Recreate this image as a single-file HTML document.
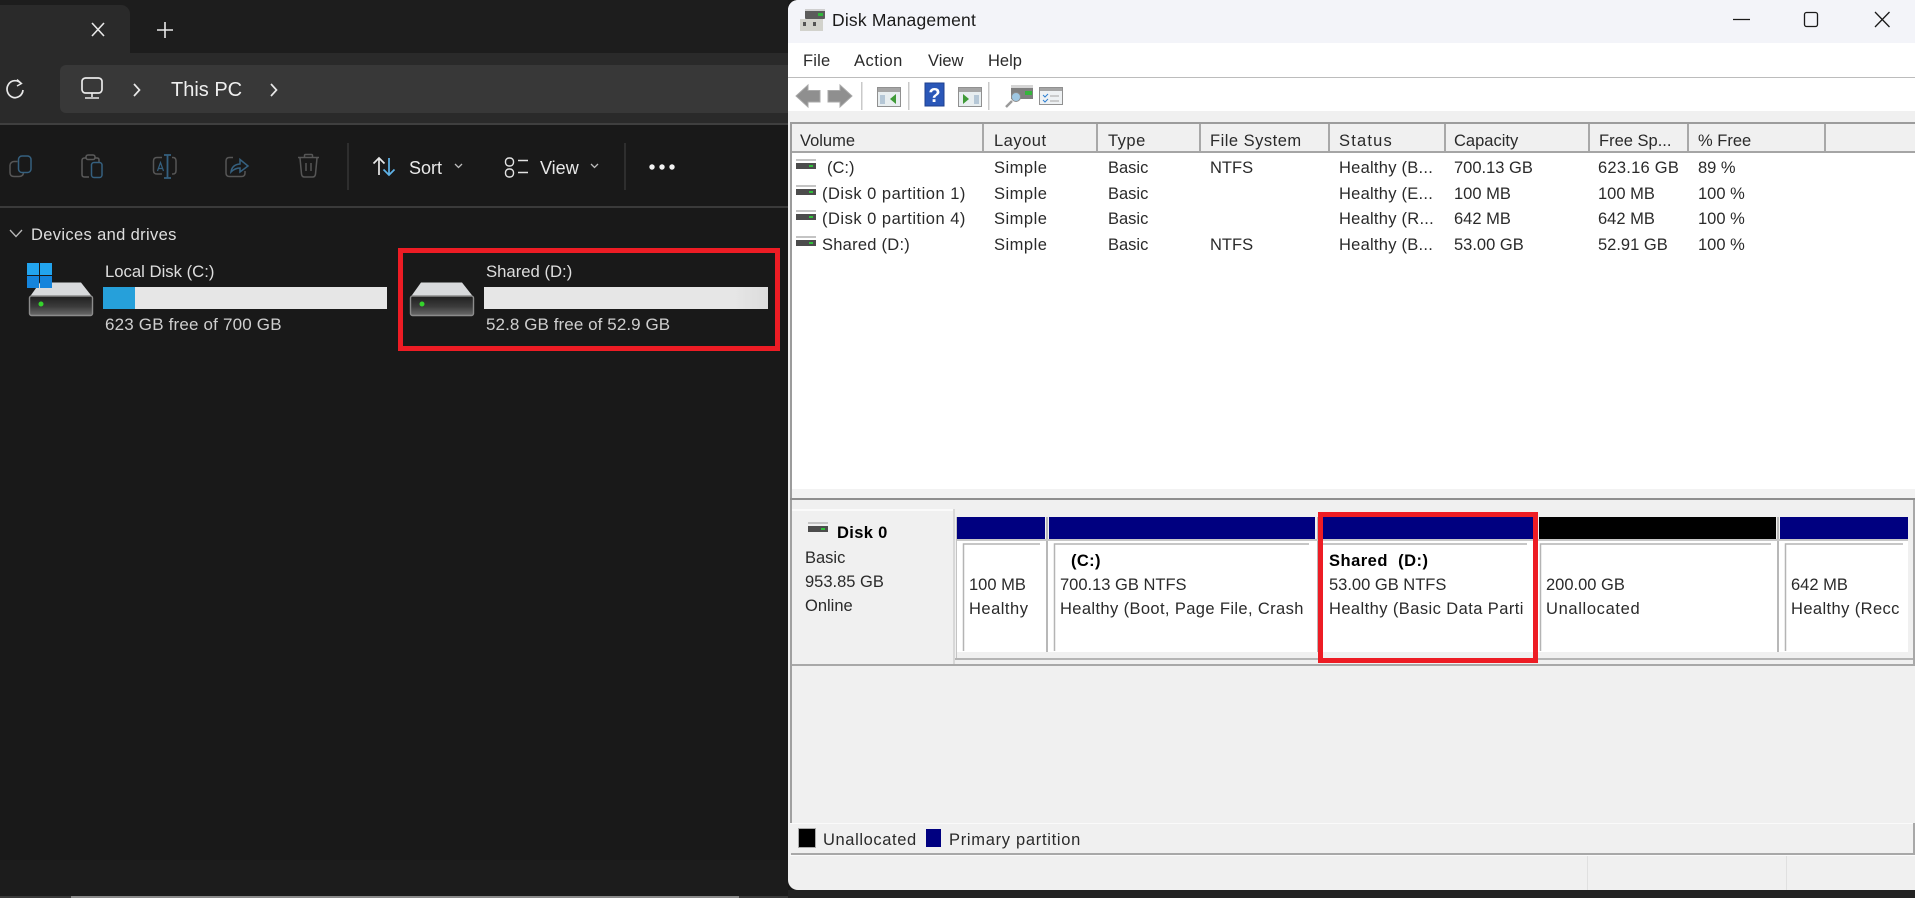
<!DOCTYPE html>
<html><head><meta charset="utf-8"><title>Disk Management</title>
<style>
html,body{margin:0;padding:0;background:#191919}
#p{position:relative;width:1915px;height:898px;overflow:hidden;background:#191919;font-family:"Liberation Sans",sans-serif}
.a{position:absolute}
.t{position:absolute;white-space:nowrap;font-size:17px;line-height:20px;color:#1c1c1c;transform:translateY(-10px)}
.l{color:#dedede}
.b{font-weight:bold;color:#000;letter-spacing:.35px}
.s{color:#2a2a2a;font-size:16.5px}
.w{letter-spacing:.5px}
.m{letter-spacing:.25px}
svg{position:absolute;overflow:visible}
.bar{position:absolute;top:517px;height:22px}
.sep{position:absolute;top:517px;height:141px;width:2px;background:#b8b8b8}
</style></head><body><div id="p">

<!-- Explorer chrome -->
<div class="a" style="left:0;top:0;width:788px;height:53px;background:#1d1d1d"></div>
<div class="a" style="left:0;top:5px;width:130px;height:48px;background:#2a2a2a;border-top-right-radius:9px"></div>
<div class="a" style="left:0;top:53px;width:788px;height:70px;background:#2a2a2a"></div>
<div class="a" style="left:60px;top:65px;width:728px;height:48px;background:#383838;border-radius:6px 0 0 6px"></div>
<div class="a" style="left:0;top:123px;width:788px;height:2px;background:#3f3f3f"></div>
<div class="a" style="left:0;top:206px;width:788px;height:2px;background:#3a3a3a"></div>
<div class="a" style="left:0;top:860px;width:788px;height:36px;background:#1c1c1c"></div>
<div class="a" style="left:71px;top:896px;width:668px;height:2px;background:#8a8a8a"></div>
<div class="a" style="left:0;top:896px;width:71px;height:2px;background:#3a3a3a"></div>
<div class="a" style="left:739px;top:896px;width:49px;height:2px;background:#3a3a3a"></div>
<div class="a" style="left:788px;top:890px;width:1127px;height:8px;background:#232323"></div>

<svg style="left:0;top:0" width="340" height="120" fill="none" stroke="#e8e8e8" stroke-width="1.6">
<path d="M92 23L104 36M104 23L92 36"/>
<path d="M165 22V38M157 30H173"/>
<path d="M21 83.5A8 8.5 0 1 0 23 90" stroke-width="1.7"/><path d="M17 79.5L21.5 83.5L17 86" stroke-width="1.4"/>
<rect x="82" y="78" width="20" height="15" rx="3.5" stroke-width="1.7"/><path d="M92 93V97M85 98H99" stroke-width="1.6"/>
<path d="M134 84L139.5 90L134 96M271 84L276.5 90L271 96" stroke-width="1.7"/>
</svg>
<div class="t l" style="left:171px;top:90px;font-size:20px;color:#efefef">This PC</div>
<svg style="left:0;top:0" width="340" height="210" fill="none" stroke-width="1.5">
<!-- copy -->
<path d="M17.500 161.500H14a4 4 0 0 0-4 4v7q0 4 4 4h5q4 0 4.500-3.500" stroke="#565656"/>
<rect x="18.500" y="156" width="12.500" height="16.500" rx="3.500" stroke="#35607f"/>
<!-- paste -->
<path d="M86 158h-1.500q-2.500 0-2.500 2.500v14q0 2.500 2.500 2.500h4.500M95 158h2q2 0 2 2v2" stroke="#5a5a5a"/>
<rect x="86" y="155" width="9" height="4.500" rx="2" stroke="#5a5a5a"/>
<rect x="91.500" y="162.500" width="10.500" height="15" rx="2.500" stroke="#35607f"/>
<!-- rename -->
<path d="M162 157.500h-5q-3.500 0-3.500 3.500v9.500q0 3.500 3.500 3.500h5M172 157.500h1q3 0 3 3.500v9.500q0 3.500-3 3.500h-1" stroke="#565656"/>
<path d="M167.500 155.500V177.500M164 155h7M164 178h7" stroke="#35607f" stroke-width="1.8"/><path d="M157.500 171l3-8.500 3 8.500M158.500 168.500h4" stroke="#35607f" stroke-width="1.200"/>
<!-- share -->
<path d="M233 157.500h-3.500q-3.500 0-3.500 3.500v12q0 3.500 3.500 3.500h12q3.500 0 3.500-3.500v-2" stroke="#565656"/>
<path d="M231 172q1-7.500 9-8v-4.500l8 6.500-8 6v-4q-5 0-9 4z" stroke="#35607f"/>
<!-- delete -->
<path d="M298 157.500h21M304.500 157.500v-2q0-1 1-1h6q1 0 1 1v2M300 158l1.500 16q.3 3 3 3h8q2.700 0 3-3l1.500-16M306 163v8M311 163v8" stroke="#565656"/>
</svg>
<div class="a" style="left:347px;top:143px;width:2px;height:47px;background:#2e2e2e"></div>
<div class="a" style="left:624px;top:143px;width:2px;height:47px;background:#2e2e2e"></div>
<svg style="left:370px;top:150px" width="320" height="36" fill="none" stroke-width="1.7">
<path d="M9 25V8M3.500 13.500L9 8l5.500 5.500" stroke="#e8e8e8"/>
<path d="M19 8V25M13.500 19.500L19 25l5.500-5.500" stroke="#5fb3e8"/>
<path d="M85 14l3.500 3.500L92 14M221 14l3.500 3.500L228 14" stroke="#bdbdbd" stroke-width="1.3"/>
<rect x="135.500" y="8" width="8" height="8" rx="3.500" stroke="#e2e2e2" stroke-width="1.4"/><rect x="135.500" y="19" width="8" height="8" rx="3.500" stroke="#e2e2e2" stroke-width="1.4"/>
<path d="M148 10.500h10M148 22.500h10" stroke="#e2e2e2" stroke-width="1.5"/>
<g fill="#f2f2f2" stroke="none"><circle cx="282" cy="17" r="2.700"/><circle cx="292" cy="17" r="2.700"/><circle cx="302" cy="17" r="2.700"/></g>
</svg>
<div class="t l" style="left:409px;top:168px;color:#e8e8e8;font-size:18px">Sort</div>
<div class="t l" style="left:540px;top:168px;color:#e8e8e8;font-size:18px">View</div>

<svg style="left:0;top:0" width="60" height="250" fill="none"><path d="M10 230l6 6.500 6-6.500" stroke="#b8b8b8" stroke-width="1.3"/></svg>
<div class="t l" style="left:31px;top:235px;font-size:16.500px;letter-spacing:.35px">Devices and drives</div>

<!-- Drives -->
<svg style="left:0;top:0;" width="0" height="0"><defs>
<linearGradient id="g1" x1="0" y1="0" x2="0" y2="1"><stop offset="0" stop-color="#1f1f1f"/><stop offset=".55" stop-color="#3c3c3c"/><stop offset="1" stop-color="#6b6b6b"/></linearGradient></defs></svg>
<svg style="left:29px;top:282px" width="66" height="34">
<path d="M1 14.500L11 .5H52L63 14.500z" fill="#d8dadc"/><rect x=".5" y="14" width="63" height="19.500" rx="2" fill="url(#g1)" stroke="#8c8c8c" stroke-width="1.400"/><circle cx="12" cy="22" r="2.500" fill="#35d32c"/></svg>
<svg style="left:410px;top:282px" width="66" height="34">
<path d="M1 14.500L11 .5H52L63 14.500z" fill="#d8dadc"/><rect x=".5" y="14" width="63" height="19.500" rx="2" fill="url(#g1)" stroke="#8c8c8c" stroke-width="1.400"/><circle cx="12" cy="22" r="2.500" fill="#35d32c"/></svg>
<svg style="left:27px;top:263px" width="26" height="25" fill="#1b95e6"><rect width="12" height="12" fill="#22a4ee"/><rect x="13" width="12" height="12" fill="#22a4ee"/><rect y="13" width="12" height="12" fill="#1484dc"/><rect x="13" y="13" width="12" height="12" fill="#1484dc"/></svg>

<div class="t l" style="left:105px;top:272px;font-size:16.700px">Local Disk (C:)</div>
<div class="a" style="left:103px;top:287px;width:284px;height:22px;background:#e6e6e6"></div>
<div class="a" style="left:103px;top:287px;width:32px;height:22px;background:#26a0da"></div>
<div class="t l" style="left:105px;top:325px;color:#cfcfcf;letter-spacing:.18px">623 GB free of 700 GB</div>
<div class="t l" style="left:486px;top:272px;font-size:16.700px">Shared (D:)</div>
<div class="a" style="left:484px;top:287px;width:284px;height:22px;background:linear-gradient(90deg,#e6e6e6 88%,#dcdcdc)"></div>
<div class="t l" style="left:486px;top:325px;color:#cfcfcf;letter-spacing:.08px">52.8 GB free of 52.9 GB</div>
<div class="a" style="left:398px;top:248px;width:382px;height:103px;border:5px solid #ed1c24;box-sizing:border-box"></div>

<!-- Window -->
<div class="a" style="left:788px;top:0;width:1127px;height:890px;background:#f0f0f0;border-radius:10px 0 0 10px;overflow:hidden">
<div class="a" style="left:0;top:0;width:1127px;height:43px;background:#f3f4f9"></div>
<div class="a" style="left:0;top:43px;width:1127px;height:34px;background:#fff"></div>
<div class="a" style="left:0;top:77px;width:1127px;height:1px;background:#bcbcbc"></div>
<div class="a" style="left:0;top:78px;width:1127px;height:33px;background:#fff"></div>
</div>

<!-- title -->
<svg style="left:799px;top:7px" width="28" height="26">
<rect x="6" y="3" width="20" height="9" rx="1" fill="#5b5b5b"/><rect x="6" y="2" width="20" height="2" fill="#cfcfcf"/><rect x="19" y="6" width="5" height="3" fill="#2fb53a"/>
<rect x="1" y="12" width="23" height="12" fill="#d2d2cc"/><rect x="4" y="15" width="3" height="4" fill="#555"/><rect x="14" y="15" width="3" height="4" fill="#555"/></svg>
<div class="t" style="left:832px;top:20px;color:#1a1a1a;font-size:17.500px;letter-spacing:.2px">Disk Management</div>
<svg style="left:0;top:0" width="1915" height="40" fill="none" stroke="#1a1a1a" stroke-width="1.300">
<path d="M1733 19.500H1750"/>
<rect x="1804.500" y="12.500" width="13" height="14" rx="2"/>
<path d="M1875 12L1889.500 27M1889.500 12L1875 27"/>
</svg>

<div class="t s" style="left:803px;top:61px;letter-spacing:.2px">File</div>
<div class="t s" style="left:854px;top:61px;letter-spacing:.5px">Action</div>
<div class="t s" style="left:928px;top:61px">View</div>
<div class="t s" style="left:988px;top:61px">Help</div>

<!-- toolbar icons -->
<svg style="left:790px;top:78px" width="300" height="33">
<path d="M6 18L18 7V12.500H30V24H18V29z" fill="#8f8f8f" stroke="#a8a8a8"/>
<path d="M62 18L50 7V12.500H38V24H50V29z" fill="#8f8f8f" stroke="#a8a8a8"/>
<rect x="71" y="4" width="1.500" height="28" fill="#c9c9c9"/><rect x="118" y="4" width="1.500" height="28" fill="#c9c9c9"/><rect x="198" y="4" width="1.500" height="28" fill="#c9c9c9"/>
<rect x="87.500" y="9.500" width="23" height="19" fill="#e8eef0" stroke="#909090"/><rect x="88" y="10" width="22" height="4" fill="#a5a5a5"/><rect x="90" y="17" width="5" height="9" fill="#b5c7d6"/><path d="M106 16v10l-6-5z" fill="#3f9a37"/>
<rect x="135" y="5" width="19" height="23" fill="#2a57b8" stroke="#1d3f8e"/><text x="144.500" y="24" font-family="Liberation Sans" font-size="20" font-weight="bold" fill="#fff" text-anchor="middle">?</text>
<rect x="168.500" y="9.500" width="23" height="19" fill="#e8eef0" stroke="#909090"/><rect x="169" y="10" width="22" height="4" fill="#a5a5a5"/><rect x="184" y="17" width="5" height="9" fill="#b5c7d6"/><path d="M173 16v10l6-5z" fill="#3f9a37"/>
<rect x="221" y="9" width="22" height="12" fill="#7f7f7f"/><rect x="221" y="7" width="22" height="3" fill="#d5d5d5"/><rect x="235" y="13" width="7" height="4" fill="#35b53c"/><circle cx="226" cy="19" r="4.500" fill="#9fc7e2" stroke="#8c8c8c"/><path d="M222 23L216 29" stroke="#9a9a9a" stroke-width="2.500"/>
<rect x="249.500" y="9.500" width="23" height="17" fill="#eef1f3" stroke="#909090"/><rect x="250" y="10" width="22" height="3" fill="#a5a5a5"/><path d="M253 17l2 2 3-3M253 22l2 2 3-3" stroke="#2e7fd0" fill="none"/><path d="M260 18h9M260 23h9" stroke="#a5a5a5"/>
</svg>

<!-- list -->
<div class="a" style="left:790px;top:122px;width:1125px;height:2px;background:#9c9c9c"></div>
<div class="a" style="left:790px;top:122px;width:2px;height:378px;background:#9c9c9c"></div>
<div class="a" style="left:792px;top:124px;width:1123px;height:27px;background:#f0f0f0"></div>
<div class="a" style="left:792px;top:151px;width:1123px;height:2px;background:#a5a5a5"></div>
<div class="a" style="left:792px;top:153px;width:1123px;height:336px;background:#fff"></div>
<div class="a" style="left:792px;top:489px;width:1123px;height:9px;background:#f2f2f2"></div>
<div class="a" style="left:790px;top:498px;width:1125px;height:2px;background:#8e8e8e"></div>
<div class="a" style="left:982px;top:124px;width:2px;height:27px;background:#a8a8a8"></div>
<div class="a" style="left:1096px;top:124px;width:2px;height:27px;background:#a8a8a8"></div>
<div class="a" style="left:1199px;top:124px;width:2px;height:27px;background:#a8a8a8"></div>
<div class="a" style="left:1328px;top:124px;width:2px;height:27px;background:#a8a8a8"></div>
<div class="a" style="left:1444px;top:124px;width:2px;height:27px;background:#a8a8a8"></div>
<div class="a" style="left:1588px;top:124px;width:2px;height:27px;background:#a8a8a8"></div>
<div class="a" style="left:1687px;top:124px;width:2px;height:27px;background:#a8a8a8"></div>
<div class="a" style="left:1824px;top:124px;width:2px;height:27px;background:#a8a8a8"></div>

<div class="t s" style="left:800px;top:141px">Volume</div><div class="t s w" style="left:994px;top:141px">Layout</div><div class="t s w" style="left:1108px;top:141px">Type</div><div class="t s w" style="left:1210px;top:141px">File System</div><div class="t s" style="left:1339px;top:141px;letter-spacing:1.2px">Status</div><div class="t s" style="left:1454px;top:141px">Capacity</div><div class="t s" style="left:1599px;top:141px">Free Sp...</div><div class="t s" style="left:1698px;top:141px">% Free</div>

<svg style="left:796px;top:158px" width="22" height="96">
<g><rect x="0" y="1" width="20" height="2" fill="#c4c4c4"/><rect x="0" y="5" width="20" height="6" fill="#4c4c4c"/><rect x="13" y="7" width="4" height="2" fill="#2fc03a"/></g>
<g transform="translate(0,26)"><rect x="0" y="1" width="20" height="2" fill="#c4c4c4"/><rect x="0" y="5" width="20" height="6" fill="#4c4c4c"/><rect x="13" y="7" width="4" height="2" fill="#2fc03a"/></g>
<g transform="translate(0,51)"><rect x="0" y="1" width="20" height="2" fill="#c4c4c4"/><rect x="0" y="5" width="20" height="6" fill="#4c4c4c"/><rect x="13" y="7" width="4" height="2" fill="#2fc03a"/></g>
<g transform="translate(0,77)"><rect x="0" y="1" width="20" height="2" fill="#c4c4c4"/><rect x="0" y="5" width="20" height="6" fill="#4c4c4c"/><rect x="13" y="7" width="4" height="2" fill="#2fc03a"/></g>
</svg>

<div class="t s" style="left:827px;top:168px">(C:)</div><div class="t s w" style="left:994px;top:168px">Simple</div><div class="t s" style="left:1108px;top:168px">Basic</div><div class="t s" style="left:1210px;top:168px">NTFS</div><div class="t s m" style="left:1339px;top:168px">Healthy (B...</div><div class="t s" style="left:1454px;top:168px">700.13 GB</div><div class="t s m" style="left:1598px;top:168px">623.16 GB</div><div class="t s" style="left:1698px;top:168px">89 %</div>
<div class="t s w" style="left:822px;top:194px">(Disk 0 partition 1)</div><div class="t s w" style="left:994px;top:194px">Simple</div><div class="t s" style="left:1108px;top:194px">Basic</div><div class="t s m" style="left:1339px;top:194px">Healthy (E...</div><div class="t s" style="left:1454px;top:194px">100 MB</div><div class="t s" style="left:1598px;top:194px">100 MB</div><div class="t s" style="left:1698px;top:194px">100 %</div>
<div class="t s w" style="left:822px;top:219px">(Disk 0 partition 4)</div><div class="t s w" style="left:994px;top:219px">Simple</div><div class="t s" style="left:1108px;top:219px">Basic</div><div class="t s m" style="left:1339px;top:219px">Healthy (R...</div><div class="t s" style="left:1454px;top:219px">642 MB</div><div class="t s" style="left:1598px;top:219px">642 MB</div><div class="t s" style="left:1698px;top:219px">100 %</div>
<div class="t s m" style="left:822px;top:245px">Shared (D:)</div><div class="t s w" style="left:994px;top:245px">Simple</div><div class="t s" style="left:1108px;top:245px">Basic</div><div class="t s" style="left:1210px;top:245px">NTFS</div><div class="t s m" style="left:1339px;top:245px">Healthy (B...</div><div class="t s" style="left:1454px;top:245px">53.00 GB</div><div class="t s" style="left:1598px;top:245px">52.91 GB</div><div class="t s" style="left:1698px;top:245px">100 %</div>

<!-- graphical -->
<div class="a" style="left:790px;top:500px;width:2px;height:324px;background:#a0a0a0"></div>
<div class="a" style="left:792px;top:509px;width:161px;height:155px;background:#f0f0f0;border-top:2px solid #fafafa;box-sizing:border-box"></div>
<div class="a" style="left:953px;top:509px;width:2px;height:155px;background:#d8d8d8"></div>
<div class="a" style="left:792px;top:664px;width:1123px;height:2px;background:#a8a8a8"></div>
<div class="a" style="left:955px;top:658px;width:958px;height:2px;background:#b4b4b4"></div>
<div class="a" style="left:1913px;top:500px;width:2px;height:164px;background:#a8a8a8"></div>

<svg style="left:808px;top:521px" width="22" height="14"><rect x="0" y="1" width="20" height="2" fill="#c4c4c4"/><rect x="0" y="5" width="20" height="6" fill="#4c4c4c"/><rect x="13" y="7" width="4" height="2" fill="#2fc03a"/></svg>
<div class="t b" style="left:837px;top:533px;font-size:16.500px">Disk 0</div>
<div class="t s" style="left:805px;top:558px">Basic</div><div class="t s" style="left:805px;top:582px">953.85 GB</div><div class="t s" style="left:805px;top:606px">Online</div>

<div class="bar" style="left:957px;width:88px;background:#000080"></div>
<div class="bar" style="left:1049px;width:266px;background:#000080"></div>
<div class="bar" style="left:1322px;width:211px;background:#000080"></div>
<div class="bar" style="left:1539px;width:237px;background:#000"></div>
<div class="bar" style="left:1780px;width:128px;background:#000080"></div>
<div class="a" style="left:957px;top:539px;width:951px;height:119px;background:#fff"></div>
<div class="sep" style="left:1046px"></div><div class="sep" style="left:1317px"></div><div class="sep" style="left:1534px"></div><div class="sep" style="left:1777px"></div>
<div class="a" style="left:956px;top:517px;width:1px;height:141px;background:#c4c4c4"></div>
<div class="a" style="left:957px;top:539px;width:951px;height:2px;background:#c8c8c8"></div>
<div class="a" style="left:957px;top:652px;width:951px;height:6px;background:#f0f0f0"></div>

<svg style="left:0;top:0" width="1915" height="660" fill="none" stroke="#b4b4b4" stroke-width="1.500">
<path d="M963.500 651V544H1040M1054.500 651V544H1309M1321.500 651V544H1527M1540.500 651V544H1771M1785.500 651V544H1903"/>
</svg>

<div class="t s" style="left:969px;top:585px">100 MB</div><div class="t s w" style="left:969px;top:609px">Healthy</div>
<div class="t b" style="left:1071px;top:561px;font-size:16.500px">(C:)</div><div class="t s" style="left:1060px;top:585px">700.13 GB NTFS</div><div class="t s" style="left:1060px;top:609px;letter-spacing:.38px">Healthy (Boot, Page File, Crash</div>
<div class="t b" style="left:1329px;top:561px;font-size:16.500px;letter-spacing:.5px">Shared&nbsp; (D:)</div><div class="t s" style="left:1329px;top:585px">53.00 GB NTFS</div><div class="t s" style="left:1329px;top:609px;letter-spacing:.42px">Healthy (Basic Data Parti</div>
<div class="t s" style="left:1546px;top:585px">200.00 GB</div><div class="t s" style="left:1546px;top:609px;letter-spacing:.65px">Unallocated</div>
<div class="t s" style="left:1791px;top:585px">642 MB</div><div class="t s" style="left:1791px;top:609px;letter-spacing:.4px">Healthy (Recc</div>

<div class="a" style="left:1318px;top:512px;width:220px;height:151px;border:5px solid #ed1c24;box-sizing:border-box"></div>

<!-- legend -->
<div class="a" style="left:790px;top:823px;width:1125px;height:1px;background:#fafafa"></div>
<div class="a" style="left:791px;top:853px;width:1122px;height:2px;background:#a8a8a8"></div>
<div class="a" style="left:1913px;top:823px;width:2px;height:32px;background:#a8a8a8"></div>
<div class="a" style="left:790px;top:855px;width:1125px;height:1px;background:#fafafa"></div>
<div class="a" style="left:799px;top:829px;width:16px;height:18px;background:#000;outline:1px solid #aaa"></div>
<div class="a" style="left:926px;top:829px;width:15px;height:18px;background:#000080"></div>
<div class="t s" style="left:823px;top:840px;letter-spacing:.6px">Unallocated</div>
<div class="t s" style="left:949px;top:840px;letter-spacing:.7px">Primary partition</div>
<div class="a" style="left:1587px;top:856px;width:1px;height:34px;background:#e0e0e0"></div>
<div class="a" style="left:1786px;top:856px;width:1px;height:34px;background:#e0e0e0"></div>
</div></body></html>
